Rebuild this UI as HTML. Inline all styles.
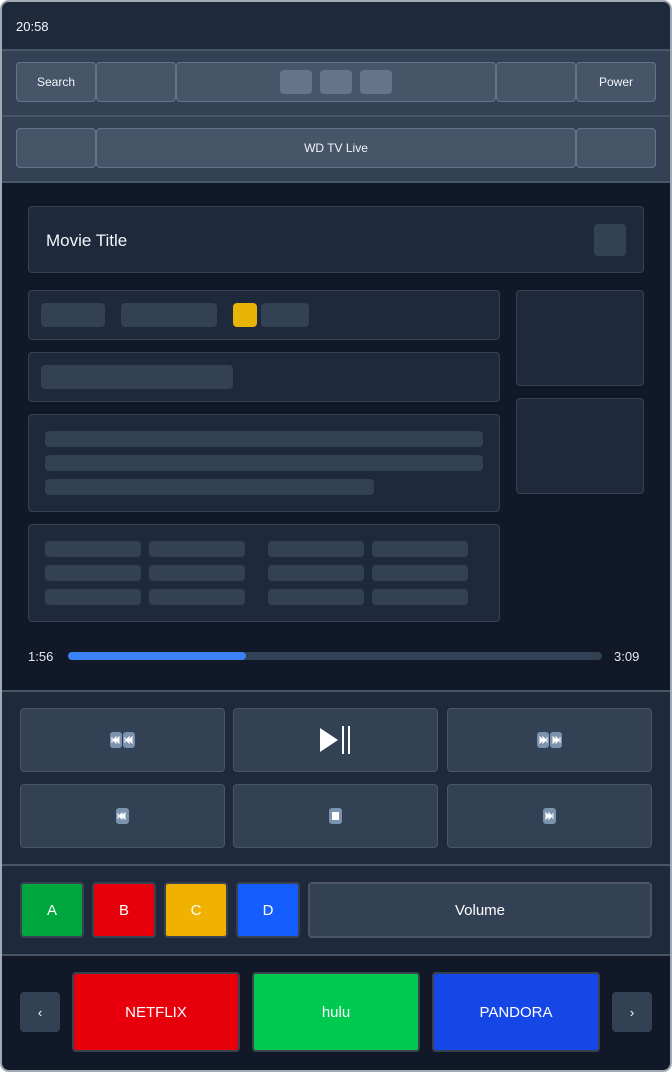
<!DOCTYPE html>
<html><head><meta charset="utf-8"><style>
*{margin:0;padding:0;box-sizing:border-box}
body{width:672px;height:1072px;background:#fff;font-family:"Liberation Sans",sans-serif;color:#fff;position:relative;overflow:hidden}
.a{position:absolute}
.frame{left:0;top:0;width:672px;height:1072px;border:2px solid #a3a9b3;border-radius:9px;overflow:hidden;background:#111827}
.btn{position:absolute;background:#475569;border:1px solid #64748b;border-radius:4px;display:flex;align-items:center;justify-content:center;font-size:12px;color:#f1f5f9}
.card{position:absolute;background:#1e293b;border:1px solid #374151;border-radius:4px}
.bar{position:absolute;background:#334155;border-radius:4px}
.cb{position:absolute;background:#334155;border:1px solid #4b5563;border-radius:4px;display:flex;align-items:center;justify-content:center}
.line{position:absolute;left:0;width:672px;height:2px;background:#475569}
.col{position:absolute;border:2px solid #374151;border-radius:4px;display:flex;align-items:center;justify-content:center;font-size:15px;color:#fff}
</style></head><body>
<div class="a frame">
<div class="a" style="left:0;top:0;width:672px;height:48px;background:#1e293b"></div>
<div class="a" style="left:14px;top:17px;font-size:13px;color:#f1f5f9">20:58</div>
<div class="line" style="top:47px"></div>
<div class="a" style="left:0;top:49px;width:672px;height:131px;background:#334155"></div>
<div class="line" style="top:113px"></div>
<div class="line" style="top:179px"></div>
<div class="btn" style="left:14px;top:60px;width:80px;height:40px">Search</div>
<div class="btn" style="left:94px;top:60px;width:80px;height:40px"></div>
<div class="btn" style="left:174px;top:60px;width:320px;height:40px"></div>
<div class="a" style="left:278px;top:68px;width:32px;height:24px;background:#64748b;border-radius:4px"></div>
<div class="a" style="left:318px;top:68px;width:32px;height:24px;background:#64748b;border-radius:4px"></div>
<div class="a" style="left:358px;top:68px;width:32px;height:24px;background:#64748b;border-radius:4px"></div>
<div class="btn" style="left:494px;top:60px;width:80px;height:40px"></div>
<div class="btn" style="left:574px;top:60px;width:80px;height:40px">Power</div>
<div class="btn" style="left:14px;top:126px;width:80px;height:40px"></div>
<div class="btn" style="left:94px;top:126px;width:480px;height:40px">WD TV Live</div>
<div class="btn" style="left:574px;top:126px;width:80px;height:40px"></div>

<div class="card" style="left:26px;top:204px;width:616px;height:67px"></div>
<div class="a" style="left:44px;top:229px;font-size:17px;color:#f1f5f9">Movie Title</div>
<div class="bar" style="left:592px;top:222px;width:32px;height:32px"></div>

<div class="card" style="left:26px;top:288px;width:472px;height:50px"></div>
<div class="bar" style="left:39px;top:301px;width:64px;height:24px"></div>
<div class="bar" style="left:119px;top:301px;width:96px;height:24px"></div>
<div class="bar" style="left:231px;top:301px;width:24px;height:24px;background:#eab308"></div>
<div class="bar" style="left:259px;top:301px;width:48px;height:24px"></div>
<div class="card" style="left:514px;top:288px;width:128px;height:96px"></div>
<div class="card" style="left:514px;top:396px;width:128px;height:96px"></div>
<div class="card" style="left:26px;top:350px;width:472px;height:50px"></div>
<div class="bar" style="left:39px;top:363px;width:192px;height:24px"></div>
<div class="card" style="left:26px;top:412px;width:472px;height:98px"></div>
<div class="bar" style="left:43px;top:429px;width:438px;height:16px"></div>
<div class="bar" style="left:43px;top:453px;width:438px;height:16px"></div>
<div class="bar" style="left:43px;top:477px;width:329px;height:16px"></div>
<div class="card" style="left:26px;top:522px;width:472px;height:98px"></div>
<div class="bar" style="left:43px;top:539px;width:96px;height:16px"></div><div class="bar" style="left:147px;top:539px;width:96px;height:16px"></div><div class="bar" style="left:266px;top:539px;width:96px;height:16px"></div><div class="bar" style="left:370px;top:539px;width:96px;height:16px"></div>
<div class="bar" style="left:43px;top:563px;width:96px;height:16px"></div><div class="bar" style="left:147px;top:563px;width:96px;height:16px"></div><div class="bar" style="left:266px;top:563px;width:96px;height:16px"></div><div class="bar" style="left:370px;top:563px;width:96px;height:16px"></div>
<div class="bar" style="left:43px;top:587px;width:96px;height:16px"></div><div class="bar" style="left:147px;top:587px;width:96px;height:16px"></div><div class="bar" style="left:266px;top:587px;width:96px;height:16px"></div><div class="bar" style="left:370px;top:587px;width:96px;height:16px"></div>
<div class="a" style="left:26px;top:647px;font-size:13px;color:#e5e7eb">1:56</div>
<div class="a" style="left:66px;top:650px;width:534px;height:8px;background:#334155;border-radius:4px"></div>
<div class="a" style="left:66px;top:650px;width:178px;height:8px;background:#3b82f6;border-radius:4px"></div>
<div class="a" style="left:612px;top:647px;font-size:13px;color:#e5e7eb">3:09</div>

<div class="line" style="top:688px"></div>
<div class="a" style="left:0;top:690px;width:672px;height:172px;background:#1e293b"></div>
<div class="line" style="top:862px"></div>
<div class="cb" style="left:18px;top:706px;width:205px;height:64px"><svg width="26" height="18"><rect x="0" y="1" width="12" height="16" rx="3" fill="#7b93ad"/><rect x="13" y="1" width="12" height="16" rx="3" fill="#7b93ad"/><path d="M2 6v6M9 6l-3 3 3 3zM6 6l-3 3 3 3zM15 6v6M22 6l-3 3 3 3zM19 6l-3 3 3 3z" stroke="#fff" fill="#fff" stroke-width="1"/></svg></div>
<div class="cb" style="left:231px;top:706px;width:205px;height:64px"><svg width="36" height="30"><polygon points="2,3 2,27 20,15" fill="#fff"/><rect x="24" y="1" width="2" height="28" fill="#fff"/><rect x="30" y="1" width="2" height="28" fill="#fff"/></svg></div>
<div class="cb" style="left:445px;top:706px;width:205px;height:64px"><svg width="26" height="18"><rect x="0" y="1" width="12" height="16" rx="3" fill="#7b93ad"/><rect x="13" y="1" width="12" height="16" rx="3" fill="#7b93ad"/><path d="M10 6v6M3 6l3 3-3 3zM6 6l3 3-3 3zM23 6v6M16 6l3 3-3 3zM19 6l3 3-3 3z" stroke="#fff" fill="#fff" stroke-width="1"/></svg></div>
<div class="cb" style="left:18px;top:782px;width:205px;height:64px"><svg width="14" height="18"><rect x="0" y="1" width="13" height="16" rx="3" fill="#7b93ad"/><path d="M2 6v6M9 6l-3 3 3 3zM6 6l-3 3 3 3z" stroke="#fff" fill="#fff" stroke-width="1"/></svg></div>
<div class="cb" style="left:231px;top:782px;width:205px;height:64px"><svg width="14" height="18"><rect x="0" y="1" width="13" height="16" rx="3" fill="#7b93ad"/><rect x="3" y="5" width="7" height="8" fill="#fff"/></svg></div>
<div class="cb" style="left:445px;top:782px;width:205px;height:64px"><svg width="14" height="18"><rect x="0" y="1" width="13" height="16" rx="3" fill="#7b93ad"/><path d="M10 6v6M3 6l3 3-3 3zM6 6l3 3-3 3z" stroke="#fff" fill="#fff" stroke-width="1"/></svg></div>

<div class="a" style="left:0;top:864px;width:672px;height:88px;background:#1e293b"></div>
<div class="line" style="top:952px"></div>
<div class="col" style="left:18px;top:880px;width:64px;height:56px;background:#00a63e">A</div>
<div class="col" style="left:90px;top:880px;width:64px;height:56px;background:#e7000b">B</div>
<div class="col" style="left:162px;top:880px;width:64px;height:56px;background:#f0b100">C</div>
<div class="col" style="left:234px;top:880px;width:64px;height:56px;background:#155dfc">D</div>
<div class="cb" style="left:306px;top:880px;width:344px;height:56px;border-width:2px;font-size:15px">Volume</div>

<div class="cb" style="left:18px;top:990px;width:40px;height:40px;border:none;font-size:13px">‹</div>
<div class="col" style="left:70px;top:970px;width:168px;height:80px;background:#e7000b">NETFLIX</div>
<div class="col" style="left:250px;top:970px;width:168px;height:80px;background:#00c950">hulu</div>
<div class="col" style="left:430px;top:970px;width:168px;height:80px;background:#1447e6">PANDORA</div>
<div class="cb" style="left:610px;top:990px;width:40px;height:40px;border:none;font-size:13px">›</div>
</div>
</body></html>
